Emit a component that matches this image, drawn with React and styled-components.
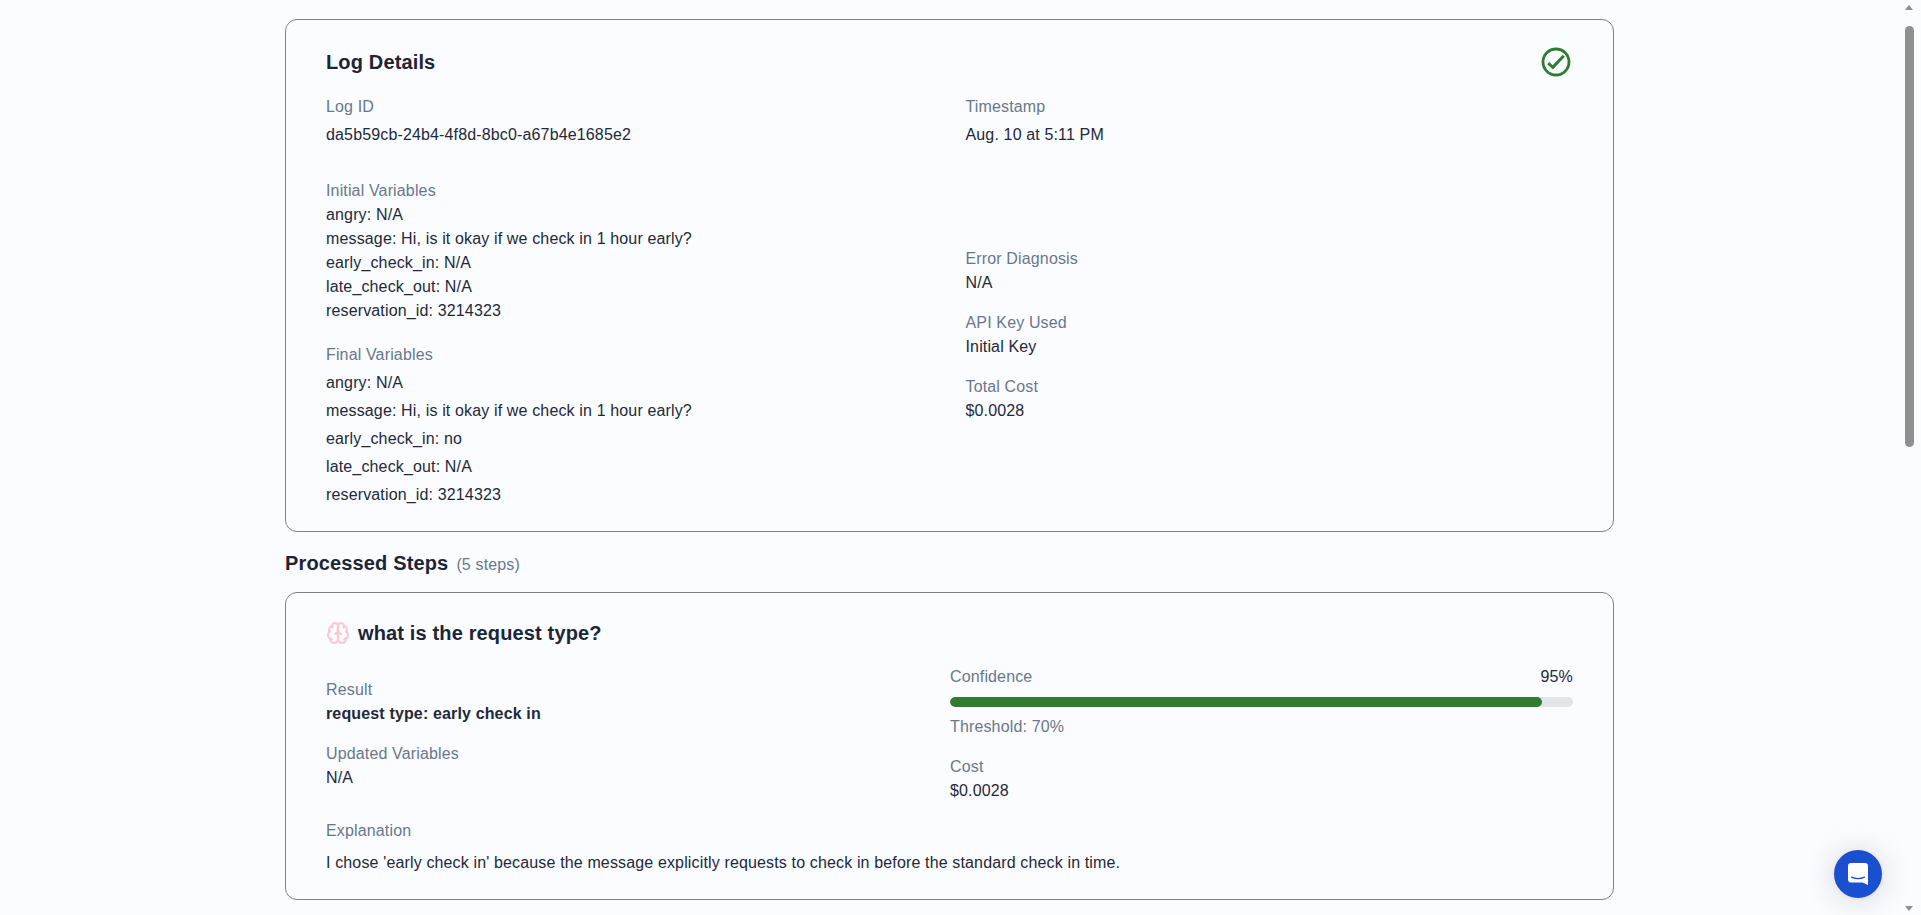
import React from "react";
import styled, { createGlobalStyle } from "styled-components";

const Global = createGlobalStyle`
  html, body { margin: 0; height: 100%; overflow: hidden; background: #fafcff; }
  #root { height: 100%; }
  * { box-sizing: border-box; }
`;

const Page = styled.div`
  height: 100vh;
  overflow: hidden;
  background: #fafcff;
  font-family: "Liberation Sans", Arial, sans-serif;
  font-size: 16px;
  line-height: 24px;
  letter-spacing: 0.145px;
  color: #1f2937;
`;

const Main = styled.main`
  width: 1329px;
  margin-left: 285px;
  padding-top: 19px;
`;

const Card = styled.section`
  border: 1px solid #808080;
  border-radius: 12px;
  padding: ${(p) => p.$pad || "24px 40px"};
  background: #fafcff;
`;

const CardHeader = styled.header`
  display: flex;
  align-items: center;
  justify-content: space-between;
  height: 36px;
  padding-right: 2px;
`;

const CardTitle = styled.h2`
  margin: 0;
  font-size: 20px;
  line-height: 28px;
  font-weight: 700;
  color: #1c2536;
`;

const Columns = styled.div`
  display: grid;
  grid-template-columns: ${(p) => p.$cols};
`;

const Label = styled.div`
  color: #6b7789;
  line-height: 24px;
`;

const Value = styled.div`
  line-height: 24px;
  margin-top: ${(p) => p.$gap || 0}px;
  font-weight: ${(p) => (p.$bold ? 700 : 400)};
`;

const Field = styled.div`
  margin-top: ${(p) => p.$top || 0}px;
`;

const FinalList = styled.div`
  margin-top: 2px;
`;

const FinalRow = styled.div`
  line-height: 28px;
`;

const SectionHeading = styled.div`
  display: flex;
  align-items: baseline;
  gap: 8px;
  margin: 17px 0 15px;
  height: 28px;
`;

const SectionTitle = styled.h3`
  margin: 0;
  font-size: 20px;
  line-height: 28px;
  font-weight: 700;
  color: #1c2536;
`;

const SectionCount = styled.span`
  color: #6b7789;
`;

const StepTitleRow = styled.div`
  display: flex;
  align-items: center;
  gap: 8px;
  height: 32px;
`;

const MeterHead = styled.div`
  display: flex;
  justify-content: space-between;
`;

const MeterTrack = styled.div`
  height: 10px;
  border-radius: 5px;
  background: #e2e4e7;
  margin: 8px 0;
  overflow: hidden;
`;

const MeterFill = styled.div`
  height: 100%;
  border-radius: 5px;
  background: #2e7d32;
`;

const Launcher = styled.button`
  position: fixed;
  left: 1834px;
  top: 850px;
  width: 48px;
  height: 48px;
  border: 0;
  padding: 0;
  border-radius: 50%;
  background: #1a4fd0;
  box-shadow: 0 1px 6px rgba(0,0,0,.06), 0 2px 32px rgba(0,0,0,.16);
  display: flex;
  align-items: center;
  justify-content: center;
`;

const ScrollThumb = styled.div`
  position: fixed;
  left: 1905px;
  top: 26px;
  width: 9px;
  height: 421px;
  border-radius: 5px;
  background: #8f8f8f;
`;

const ScrollArrow = styled.div`
  position: fixed;
  left: 1905px;
  top: ${(p) => p.$top}px;
  width: 0;
  height: 0;
  border-left: 4.5px solid transparent;
  border-right: 4.5px solid transparent;
  ${(p) => (p.$down ? "border-top: 5px solid #8f8f8f;" : "border-bottom: 5px solid #8f8f8f;")}
`;

const CheckIcon = () => (
  <svg width="30" height="30" viewBox="0 0 30 30" fill="none" stroke="#2e7d32" strokeWidth="2.8">
    <circle cx="15" cy="15" r="13" />
    <path d="M7.2 16.2l4.6 4.1 11-11.6" strokeWidth="3" />
  </svg>
);

const BrainIcon = () => (
  <svg width="24" height="24" viewBox="0 0 24 24" fill="none" stroke="#fbc8d2" strokeWidth="2.2" strokeLinecap="round" strokeLinejoin="round">
    <path d="M12 5a3 3 0 1 0-5.997.125 4 4 0 0 0-2.526 5.77 4 4 0 0 0 .556 6.588A4 4 0 1 0 12 18Z" />
    <path d="M12 5a3 3 0 1 1 5.997.125 4 4 0 0 1 2.526 5.77 4 4 0 0 1-.556 6.588A4 4 0 1 1 12 18Z" />
    <path d="M15 13a4.5 4.5 0 0 1-3-4 4.5 4.5 0 0 1-3 4" />
    <path d="M17.599 6.5a3 3 0 0 0 .399-1.375" />
    <path d="M6.003 5.125A3 3 0 0 0 6.401 6.5" />
    <path d="M3.477 10.896a4 4 0 0 1 .585-.396" />
    <path d="M19.938 10.5a4 4 0 0 1 .585.396" />
    <path d="M6 18a4 4 0 0 1-1.967-.516" />
    <path d="M19.967 17.484A4 4 0 0 1 18 18" />
  </svg>
);

const ChatIcon = () => (
  <svg width="24" height="24" viewBox="0 0 24 24">
    <path fill="#fff" d="M5 1h14a3 3 0 0 1 3 3v19l-5.5-2.6H5a3 3 0 0 1-3-3V4a3 3 0 0 1 3-3z" />
    <path fill="none" stroke="#1a4fd0" strokeWidth="1.3" strokeLinecap="round" d="M5.5 15.2c4 1.8 9 1.8 13 0" />
  </svg>
);

export default function App() {
  return (
    <Page>
      <Global />
      <Main>
        <Card $pad="24px 40px 22px">
          <CardHeader>
            <CardTitle>Log Details</CardTitle>
            <CheckIcon />
          </CardHeader>
          <Columns $cols="639.5px 1fr">
            <div>
              <Field $top={15}>
                <Label>Log ID</Label>
                <Value $gap={4}>da5b59cb-24b4-4f8d-8bc0-a67b4e1685e2</Value>
              </Field>
              <Field $top={32}>
                <Label>Initial Variables</Label>
                <Value>angry: N/A</Value>
                <Value>message: Hi, is it okay if we check in 1 hour early?</Value>
                <Value>early_check_in: N/A</Value>
                <Value>late_check_out: N/A</Value>
                <Value>reservation_id: 3214323</Value>
              </Field>
              <Field $top={20}>
                <Label>Final Variables</Label>
                <FinalList>
                  <FinalRow>angry: N/A</FinalRow>
                  <FinalRow>message: Hi, is it okay if we check in 1 hour early?</FinalRow>
                  <FinalRow>early_check_in: no</FinalRow>
                  <FinalRow>late_check_out: N/A</FinalRow>
                  <FinalRow>reservation_id: 3214323</FinalRow>
                </FinalList>
              </Field>
            </div>
            <div>
              <Field $top={15}>
                <Label>Timestamp</Label>
                <Value $gap={4}>Aug. 10 at 5:11 PM</Value>
              </Field>
              <Field $top={100}>
                <Label>Error Diagnosis</Label>
                <Value>N/A</Value>
              </Field>
              <Field $top={16}>
                <Label>API Key Used</Label>
                <Value>Initial Key</Value>
              </Field>
              <Field $top={16}>
                <Label>Total Cost</Label>
                <Value>$0.0028</Value>
              </Field>
            </div>
          </Columns>
        </Card>

        <SectionHeading>
          <SectionTitle>Processed Steps</SectionTitle>
          <SectionCount>(5 steps)</SectionCount>
        </SectionHeading>

        <Card>
          <StepTitleRow>
            <BrainIcon />
            <CardTitle>what is the request type?</CardTitle>
          </StepTitleRow>
          <Columns $cols="624px 623px">
            <div>
              <Field $top={29}>
                <Label>Result</Label>
                <Value $bold>request type: early check in</Value>
              </Field>
              <Field $top={16}>
                <Label>Updated Variables</Label>
                <Value>N/A</Value>
              </Field>
            </div>
            <div>
              <Field $top={16}>
                <MeterHead>
                  <Label>Confidence</Label>
                  <Value>95%</Value>
                </MeterHead>
                <MeterTrack>
                  <MeterFill style={{ width: "95%" }} />
                </MeterTrack>
                <Label>Threshold: 70%</Label>
              </Field>
              <Field $top={16}>
                <Label>Cost</Label>
                <Value>$0.0028</Value>
              </Field>
            </div>
          </Columns>
          <Field $top={16}>
            <Label>Explanation</Label>
            <Value $gap={8}>I chose 'early check in' because the message explicitly requests to check in before the standard check in time.</Value>
          </Field>
        </Card>
      </Main>
      <ScrollArrow $top={5} />
      <ScrollThumb />
      <ScrollArrow $top={906} $down />
      <Launcher aria-label="Open chat">
        <ChatIcon />
      </Launcher>
    </Page>
  );
}
